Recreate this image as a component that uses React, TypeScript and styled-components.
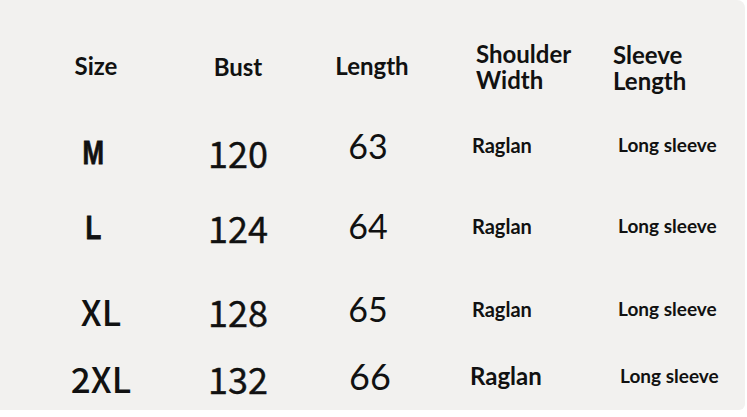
import React from 'react';
import styled, { createGlobalStyle } from 'styled-components';

const GlobalStyle = createGlobalStyle`
  html, body {
    margin: 0;
    padding: 0;
    background: #ffffff;
  }
  body {
    font-family: Lato, "Noto Sans", sans-serif;
    color: #111;
  }
`;

const Card = styled.div`
  width: 745px;
  height: 410px;
  box-sizing: border-box;
  background: #f2f1ef;
  border-radius: 0 8px 6px 0;
  padding-top: 38px;
`;

const Row = styled.div<{ $mt: number }>`
  display: grid;
  grid-template-columns: 192px 92px 168px 151px 142px;
  height: 60px;
  margin-top: ${p => p.$mt}px;
  align-items: center;
`;

const Cell = styled.div<{ $align?: 'center' | 'left'; $pl?: number; $dy?: number; $dx?: number }>`
  text-align: ${p => (p.$align === 'left' ? 'left' : 'center')};
  padding-left: ${p => p.$pl ?? 0}px;
  transform: translate(${p => p.$dx ?? 0}px, ${p => p.$dy ?? 0}px);
  white-space: nowrap;
`;

const Head = styled.span`
  font-family: Lato, "Noto Sans", sans-serif;
  font-weight: 700;
  font-size: 24px;
  line-height: 26px;
  display: inline-block;
`;

const HeadLine = styled.span`
  display: block;
  height: 26px;
  line-height: 26px;
`;

// M and L in the chart use a tall, heavy condensed face
const NarrowSize = styled.span`
  display: inline-block;
  font-family: "Liberation Sans", Arial, sans-serif;
  font-weight: 700;
  font-size: 34px;
  line-height: 1;
  -webkit-text-stroke: 0.8px #111;
  transform: scaleX(0.76);
`;

const WideSize = styled.span`
  font-family: "Noto Sans CJK SC", "Noto Sans", sans-serif;
  font-weight: 500;
  font-size: 35px;
  line-height: 1;
`;

const Bust = styled.span`
  font-family: "Noto Sans CJK SC", "Noto Sans", sans-serif;
  font-weight: 400;
  font-size: 36px;
  line-height: 1;
  -webkit-text-stroke: 0.4px #111;
`;

const Len = styled.span<{ $big?: boolean }>`
  font-family: Lato, "Noto Sans", sans-serif;
  font-weight: 400;
  font-size: ${p => (p.$big ? 36 : 34)}px;
  line-height: 1;
`;

const Note = styled.span<{ $size: number }>`
  font-family: Lato, "Noto Sans", sans-serif;
  font-weight: 700;
  font-size: ${p => p.$size}px;
  line-height: 1;
`;

type SizeRow = {
  size: string;
  narrow: boolean;
  bust: string;
  length: string;
  mt: number;
  sizeDx: number;
  lenDy: number;
  noteDy: number;
  big?: boolean;
};

const rows: SizeRow[] = [
  { size: 'M', narrow: true, bust: '120', length: '63', mt: 24, sizeDx: -3, lenDy: -6, noteDy: -7 },
  { size: 'L', narrow: true, bust: '124', length: '64', mt: 15, sizeDx: -3, lenDy: -1, noteDy: -1 },
  { size: 'XL', narrow: false, bust: '128', length: '65', mt: 24, sizeDx: 5, lenDy: -2, noteDy: -2 },
  { size: '2XL', narrow: false, bust: '132', length: '66', mt: 7, sizeDx: 5, lenDy: -2, noteDy: -2, big: true },
];

const App: React.FC = () => (
  <>
    <GlobalStyle />
    <Card>
      <Row $mt={0}>
        <Cell $dy={-2}>
          <Head>Size</Head>
        </Cell>
        <Cell $dy={-1}>
          <Head>Bust</Head>
        </Cell>
        <Cell $dx={4} $dy={-2}>
          <Head>Length</Head>
        </Cell>
        <Cell $align="left" $pl={24} $dy={-1}>
          <Head>
            <HeadLine>Shoulder</HeadLine>
            <HeadLine>Width</HeadLine>
          </Head>
        </Cell>
        <Cell $align="left" $pl={10}>
          <Head>
            <HeadLine>Sleeve</HeadLine>
            <HeadLine>Length</HeadLine>
          </Head>
        </Cell>
      </Row>
      {rows.map(r => (
        <Row key={r.size} $mt={r.mt}>
          <Cell $dx={r.sizeDx}>
            {r.narrow ? <NarrowSize>{r.size}</NarrowSize> : <WideSize>{r.size}</WideSize>}
          </Cell>
          <Cell>
            <Bust>{r.bust}</Bust>
          </Cell>
          <Cell $dy={r.lenDy} $dx={r.big ? 2 : 0}>
            <Len $big={r.big}>{r.length}</Len>
          </Cell>
          <Cell $align="left" $pl={r.big ? 18 : 20} $dy={r.noteDy}>
            <Note $size={r.big ? 24 : 20}>Raglan</Note>
          </Cell>
          <Cell $align="left" $pl={r.big ? 17 : 15} $dy={r.noteDy}>
            <Note $size={19}>Long sleeve</Note>
          </Cell>
        </Row>
      ))}
    </Card>
  </>
);

export default App;
